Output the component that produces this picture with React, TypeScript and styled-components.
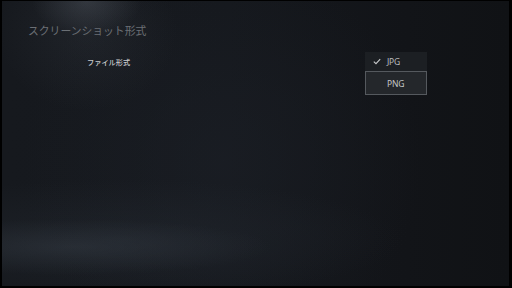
import React from "react";
import styled, { createGlobalStyle } from "styled-components";

const Global = createGlobalStyle`
  html, body { margin: 0; padding: 0; background: #000; }
  body { width: 512px; height: 288px; overflow: hidden; }
  #root { width: 512px; height: 288px; }
`;

const Frame = styled.div`
  width: 512px;
  height: 288px;
  box-sizing: border-box;
  padding: 1px 3px 2px 2px;
  background: #000;
`;

const Screen = styled.div`
  width: 100%;
  height: 100%;
  box-sizing: border-box;
  padding: 22px 0 0 0;
  background:
    radial-gradient(ellipse 55px 35px at 85px 0px, rgba(120,128,140,0.25), rgba(120,128,140,0) 100%),
    radial-gradient(ellipse 90px 80px at 85px 30px, rgba(70,76,86,0.2), rgba(70,76,86,0) 100%),
    radial-gradient(ellipse 200px 28px at 70px 246px, rgba(62,70,80,0.35), rgba(62,70,80,0) 100%),
    radial-gradient(ellipse 280px 60px at 120px 238px, rgba(40,46,54,0.4), rgba(40,46,54,0) 100%),
    radial-gradient(ellipse 200px 200px at 220px 160px, rgba(30,34,42,0.45), rgba(30,34,42,0) 100%),
    linear-gradient(90deg, #16191e 0%, #15181d 45%, #121418 80%, #101215 100%);
  font-family: "Noto Sans", "Noto Sans CJK JP", sans-serif;
`;

const Title = styled.h1`
  margin: 0 0 0 26px;
  font-family: "Noto Sans CJK JP", sans-serif;
  font-size: 10.8px;
  line-height: 15px;
  font-weight: 400;
  color: #6b6f75;
  letter-spacing: 0;
`;

const Row = styled.div`
  display: flex;
  justify-content: space-between;
  align-items: flex-start;
  margin-top: 14px;
  padding: 0 82px 0 85px;
`;

const Label = styled.div`
  font-family: "Noto Sans CJK JP", sans-serif;
  font-size: 7.2px;
  line-height: 20px;
  font-weight: 500;
  color: #c8cacd;
`;

const Menu = styled.div`
  width: 62px;
  background: #1c1f23;
  display: flex;
  flex-direction: column;
`;

const Item = styled.div<{ $focused?: boolean }>`
  display: flex;
  align-items: center;
  box-sizing: border-box;
  height: ${(p) => (p.$focused ? "24px" : "19px")};
  padding-left: ${(p) => (p.$focused ? "21px" : "8px")};
  gap: 6px;
  border: ${(p) => (p.$focused ? "1px solid #55595e" : "none")};
  background: ${(p) => (p.$focused ? "#24272b" : "transparent")};
  font-size: 8.5px;
  color: ${(p) => (p.$focused ? "#c4c6c8" : "#b9bbbe")};
  letter-spacing: -0.2px;
`;

const Check = styled.svg`
  width: 8px;
  height: 7px;
  flex: none;
`;

export default function App() {
  return (
    <>
      <Global />
      <Frame>
        <Screen>
          <Title>スクリーンショット形式</Title>
          <Row>
            <Label>ファイル形式</Label>
            <Menu>
              <Item>
                <Check viewBox="0 0 8 7">
                  <path d="M0.8 3.6 L3 5.7 L7.2 1.2" fill="none" stroke="#c8cacc" strokeWidth="1.1" />
                </Check>
                JPG
              </Item>
              <Item $focused>PNG</Item>
            </Menu>
          </Row>
        </Screen>
      </Frame>
    </>
  );
}
